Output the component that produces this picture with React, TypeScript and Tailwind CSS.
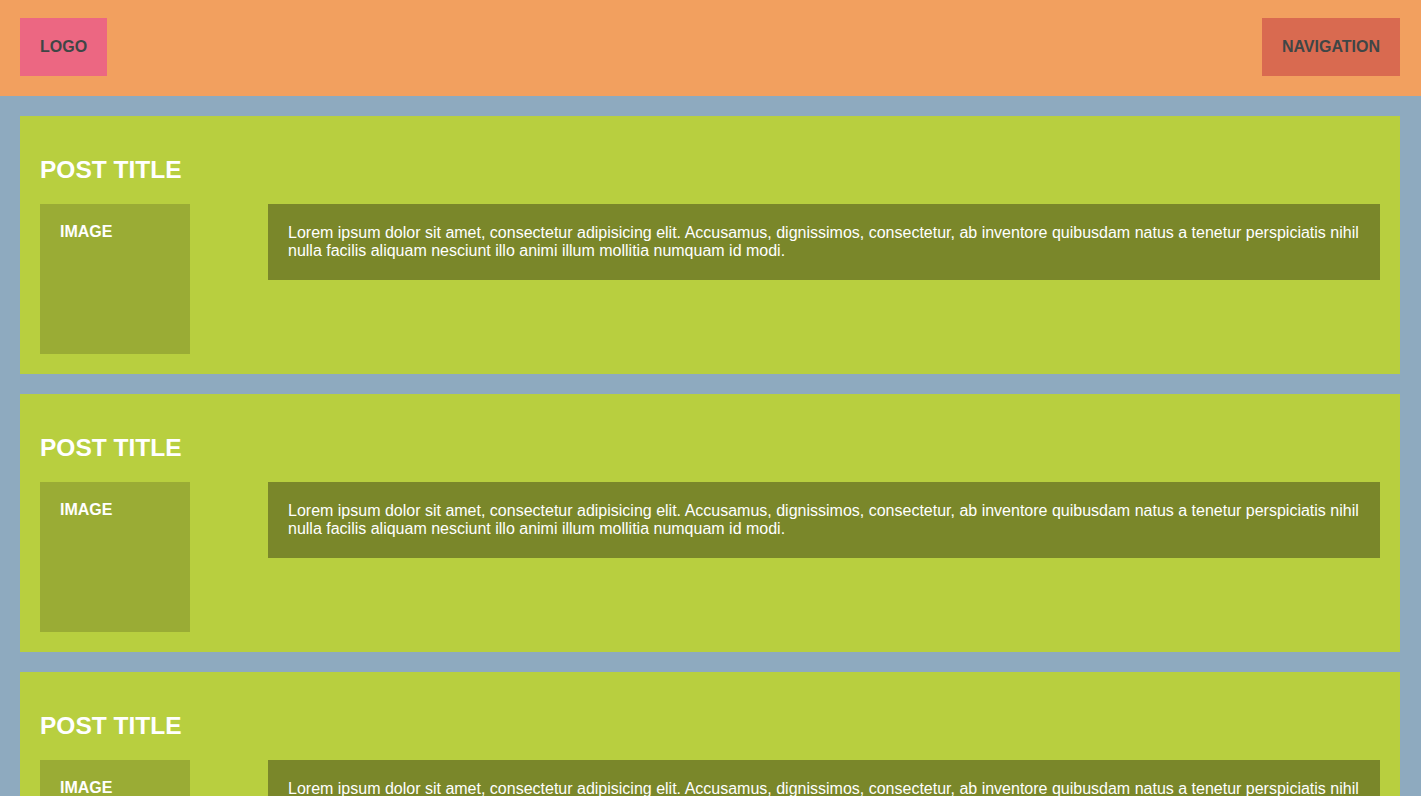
import React from "react";

const lorem =
  "Lorem ipsum dolor sit amet, consectetur adipisicing elit. Accusamus, dignissimos, consectetur, ab inventore quibusdam natus a tenetur perspiciatis nihil nulla facilis aliquam nesciunt illo animi illum mollitia numquam id modi.";

function Post() {
  return (
    <div className="bg-[#b8cf3f] px-5 pt-[40px] pb-5">
      <h2 className="text-[24.5px] leading-[28px] font-bold text-white mb-[20px]">POST TITLE</h2>
      <div className="flex items-start gap-[78px]">
        <div className="w-[150px] h-[150px] shrink-0 bg-[#9aac35] px-5 pt-[19px] text-[16px] leading-[18px] font-bold text-white">
          IMAGE
        </div>
        <div className="flex-1 bg-[#7a872a] p-5 text-[16px] leading-[18px] text-white">{lorem}</div>
      </div>
    </div>
  );
}

export default function App() {
  return (
    <div
      className="min-h-screen bg-[#8eaabf]"
      style={{ fontFamily: '"Liberation Sans", Arial, sans-serif' }}
    >
      <header className="bg-[#f2a05f] flex justify-between items-start pl-5 pr-[21px] pt-[18px] pb-5">
        <div className="bg-[#ec6782] px-5 py-5 text-[16px] leading-[18px] font-bold text-[#3f4646]">LOGO</div>
        <div className="bg-[#d96a50] px-5 py-5 text-[16px] leading-[18px] font-bold text-[#3f4646]">NAVIGATION</div>
      </header>
      <main className="pl-5 pr-[21px] py-5 flex flex-col gap-5">
        <Post />
        <Post />
        <Post />
      </main>
    </div>
  );
}
